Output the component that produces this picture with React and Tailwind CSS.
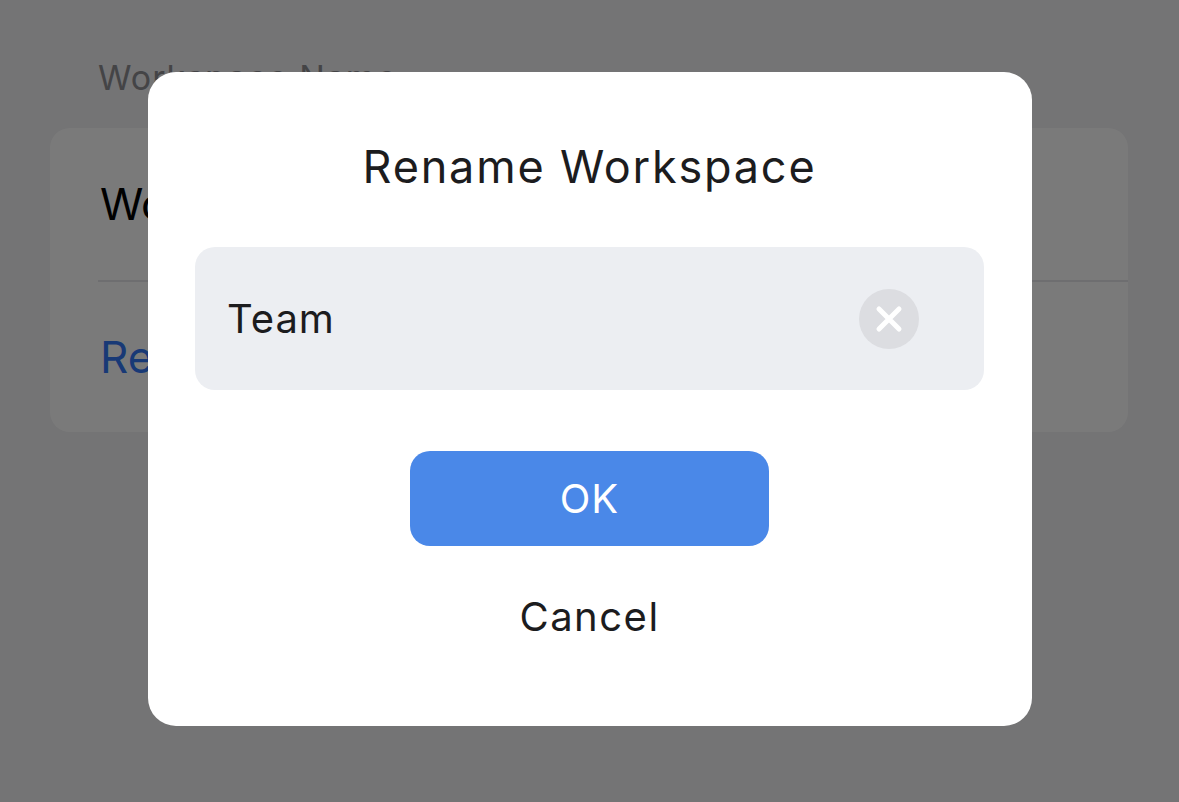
export default function App() {
  const f = { fontFamily: 'Inter, "Noto Sans", sans-serif' };
  return (
    <div style={f} className="relative w-[1179px] h-[802px] overflow-hidden bg-[#f2f2f4]">
      <div className="pt-[52px] px-[50px]">
        <div className="pl-[48px] text-[34px] leading-[52px] text-[#8e8e93] tracking-[1px]">Workspace Name</div>
        <div className="mt-[24px] w-[1078px] h-[304px] rounded-[20px] bg-white flex flex-col">
          <div className="h-[152px] pl-[50px] flex items-center text-[44px] text-black">Workspace</div>
          <div className="ml-[48px] h-[2px] bg-[#e5e5ea]" />
          <div className="flex-1 pl-[50px] flex items-center text-[44px] text-[#3478f6]">Rename Workspace</div>
        </div>
      </div>
      <div className="absolute inset-0 bg-[#000000]/[0.52] flex items-center justify-center">
        <div className="w-[884px] h-[654px] -mt-[4px] bg-white rounded-[28px] flex flex-col items-center pt-[68px]">
          <div className="h-[54px] leading-[54px] text-center text-[45px] text-[#1c1c1e] tracking-[1.8px]">Rename Workspace</div>
          <div className="mt-[53px] w-[789px] h-[143px] rounded-[20px] bg-[#eceef2] flex items-center pl-[32px] pr-[65px]">
            <span className="flex-1 text-[40px] text-[#1c1c1e] tracking-[1px]">Team</span>
            <div className="w-[60px] h-[60px] rounded-full bg-[#dcdde1] flex items-center justify-center">
              <svg width="28" height="28" viewBox="0 0 28 28"><path d="M4 4L24 24M24 4L4 24" stroke="white" strokeWidth="5" strokeLinecap="round"/></svg>
            </div>
          </div>
          <div className="mt-[61px] w-[359px] h-[95px] rounded-[20px] bg-[#4a88e8] flex items-center justify-center text-[40px] text-white tracking-[1px]">OK</div>
          <div className="mt-[48px] text-[40px] text-[#1c1c1e] leading-[46px] tracking-[1.5px]">Cancel</div>
        </div>
      </div>
    </div>
  );
}
